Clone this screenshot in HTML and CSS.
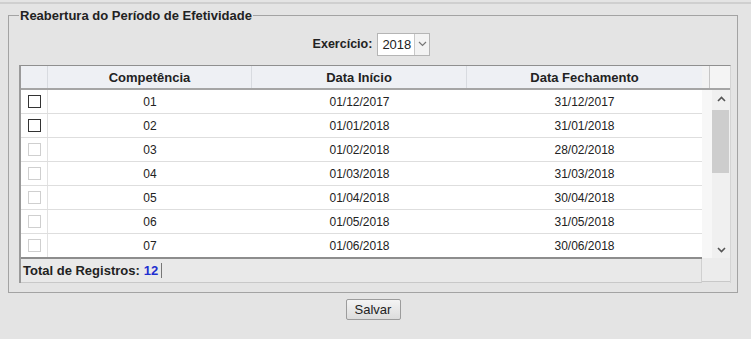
FILE: index.html
```html
<!DOCTYPE html>
<html lang="pt-BR">
<head>
<meta charset="utf-8">
<title>Reabertura do Período de Efetividade</title>
<link rel="stylesheet" href="styles.css">
</head>
<body>
<div class="page">
  <fieldset class="box">
    <legend class="box-title">Reabertura do Período de Efetividade</legend>
    <div class="filter">
      <label class="filter-label">Exercício:</label>
      <div class="select">
        <span class="select-value">2018</span>
        <span class="select-arrow"><svg width="9" height="6" viewBox="0 0 9 6"><path d="M1 1 L4.5 4.5 L8 1" fill="none" stroke="#777" stroke-width="1.2"/></svg></span>
      </div>
    </div>
    <div class="grid">
      <div class="main">
        <div class="row head">
          <div class="cell chk"></div>
          <div class="cell c1">Competência</div>
          <div class="cell c2">Data Início</div>
          <div class="cell c3">Data Fechamento</div>
        </div>
        <div class="row"><div class="cell chk"><span class="cb"></span></div><div class="cell c1">01</div><div class="cell c2">01/12/2017</div><div class="cell c3">31/12/2017</div></div>
        <div class="row"><div class="cell chk"><span class="cb"></span></div><div class="cell c1">02</div><div class="cell c2">01/01/2018</div><div class="cell c3">31/01/2018</div></div>
        <div class="row"><div class="cell chk"><span class="cb off"></span></div><div class="cell c1">03</div><div class="cell c2">01/02/2018</div><div class="cell c3">28/02/2018</div></div>
        <div class="row"><div class="cell chk"><span class="cb off"></span></div><div class="cell c1">04</div><div class="cell c2">01/03/2018</div><div class="cell c3">31/03/2018</div></div>
        <div class="row"><div class="cell chk"><span class="cb off"></span></div><div class="cell c1">05</div><div class="cell c2">01/04/2018</div><div class="cell c3">30/04/2018</div></div>
        <div class="row"><div class="cell chk"><span class="cb off"></span></div><div class="cell c1">06</div><div class="cell c2">01/05/2018</div><div class="cell c3">31/05/2018</div></div>
        <div class="row last"><div class="cell chk"><span class="cb off"></span></div><div class="cell c1">07</div><div class="cell c2">01/06/2018</div><div class="cell c3">30/06/2018</div></div>
        <div class="footer">
          <span class="total-label">Total de Registros:</span>
          <span class="total-value">12</span>
          <span class="total-sep"></span>
        </div>
      </div>
      <div class="side">
        <div class="side-head"><div class="corner"></div></div>
        <div class="track">
          <div class="gap"></div>
          <div class="bar">
            <span class="arrow"><svg width="9" height="6" viewBox="0 0 9 6"><path d="M1 5 L4.5 1.5 L8 5" fill="none" stroke="#555" stroke-width="1.6"/></svg></span>
            <div class="lane"><div class="thumb"></div></div>
            <span class="arrow"><svg width="9" height="6" viewBox="0 0 9 6"><path d="M1 1 L4.5 4.5 L8 1" fill="none" stroke="#555" stroke-width="1.6"/></svg></span>
          </div>
        </div>
        <div class="side-foot"></div>
      </div>
    </div>
  </fieldset>
  <div class="actions"><button class="btn" type="button">Salvar</button></div>
</div>
</body>
</html>
```

FILE: styles.css
```css
* { box-sizing: border-box; }
html, body { margin: 0; padding: 0; }
body {
  background: #e4e4e4;
  font-family: "Liberation Sans", Arial, sans-serif;
  font-size: 12px;
  color: #222;
  width: 751px;
  height: 339px;
  overflow: hidden;
}
.page {
  border-top: 2px solid #cfcfcf;
  margin-top: 2px;
  padding-top: 4px;
}
.box {
  margin: 0 0 0 8px;
  width: 730px;
  border: 1px solid #a3a3a3;
  padding: 9px 5px 9px 10px;
  min-width: 0;
}
.box-title {
  padding: 0 1px;
  font-weight: bold;
  font-size: 13px;
  line-height: 15px;
  color: #222;
}
.filter {
  display: flex;
  justify-content: center;
  align-items: center;
  gap: 5px;
  height: 24px;
  margin-bottom: 9px;
  padding-right: 8px;
}
.filter-label {
  font-weight: bold;
  font-size: 12.5px;
  color: #222;
}
.select {
  display: flex;
  height: 23px;
  border: 1px solid #b5b5b5;
  background: #fff;
}
.select-value {
  padding: 0 3px 0 4px;
  line-height: 21px;
  font-size: 13px;
  width: 36px;
}
.select-arrow {
  width: 15px;
  border-left: 1px solid #c8c8c8;
  background: #f3f3f3;
  display: flex;
  align-items: center;
  justify-content: center;
}
.grid {
  display: flex;
  width: 712px;
  border-top: 1px solid #8f8f8f;
  border-left: 2px solid #9a9a9a;
  border-right: 1px solid #d4d4d4;
}
.main {
  width: 681px;
  display: flex;
  flex-direction: column;
}
.row {
  display: flex;
  height: 24px;
  background: #fff;
  border-bottom: 1px solid #dedede;
}
.row.head {
  height: 24px;
  background: #eef0f4;
  border-bottom: 2px solid #a5a5a5;
  font-weight: bold;
  font-size: 13px;
}
.row.last { border-bottom: 2px solid #8d8d8d; height: 25px; }
.cell {
  display: flex;
  align-items: center;
  justify-content: center;
}
.head .cell { border-right: 1px solid #d8dbe0; }
.head .cell.c3 { border-right: none; }
.chk { width: 27px; border-right: 1px solid #e2e2e2; }
.c1 { width: 204px; }
.c2 { width: 215px; }
.c3 { width: 235px; }
.cb {
  width: 13px;
  height: 13px;
  border: 1px solid #333;
  background: #fff;
}
.cb.off { border-color: #cfcfcf; }
.footer {
  height: 24px;
  display: flex;
  align-items: center;
  padding-left: 2px;
  background: #e9e9e9;
  border-bottom: 1px solid #c8c8c8;
  border-right: 1px solid #d0d0d0;
  font-size: 13px;
}
.total-label { font-weight: bold; color: #222; }
.total-value { font-weight: bold; color: #1f2fd0; margin-left: 4px; }
.total-sep {
  width: 1px;
  height: 15px;
  background: #777;
  margin-left: 3px;
}
.side {
  width: 28px;
  display: flex;
  flex-direction: column;
}
.side-head {
  height: 24px;
  background: #f2f2f2;
  border-bottom: 2px solid #a5a5a5;
  display: flex;
  justify-content: flex-end;
}
.corner {
  width: 21px;
  border-left: 1px solid #c5c5c5;
  background: #f4f4f4;
}
.track {
  height: 168px;
  display: flex;
  background: #f1f1f1;
}
.gap { width: 10px; background: #f7f7f7; }
.bar {
  width: 18px;
  display: flex;
  flex-direction: column;
  background: #f0f0f0;
}
.arrow {
  height: 17px;
  display: flex;
  align-items: center;
  justify-content: center;
}
.lane {
  flex: 1;
  padding-top: 3px;
}
.thumb {
  height: 63px;
  background: #cdcdcd;
  margin: 0 1px 0 0;
}
.side-foot {
  height: 24px;
  background: #ececec;
  border-bottom: 1px solid #c8c8c8;
}
.actions {
  width: 730px;
  margin-left: 8px;
  display: flex;
  justify-content: center;
  padding-top: 6px;
}
.btn {
  font-family: "Liberation Sans", Arial, sans-serif;
  font-size: 13px;
  color: #222;
  height: 21px;
  width: 55px;
  padding: 0;
  background: linear-gradient(#f4f4f4, #dcdcdc);
  border: 1px solid #9c9c9c;
  border-radius: 2px;
}
```
